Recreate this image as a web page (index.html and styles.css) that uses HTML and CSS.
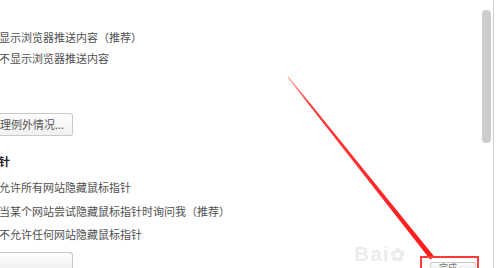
FILE: index.html
```html
<!DOCTYPE html>
<html lang="zh">
<head>
<meta charset="utf-8">
<link rel="stylesheet" href="styles.css">
</head>
<body>
<div class="page">
  <div class="content">
    <div class="opt first">显示浏览器推送内容（推荐）</div>
    <div class="opt">不显示浏览器推送内容</div>
    <div class="btn manage">理例外情况...</div>
    <div class="heading">针</div>
    <div class="opt tall first2">允许所有网站隐藏鼠标指针</div>
    <div class="opt tall">当某个网站尝试隐藏鼠标指针时询问我（推荐）</div>
    <div class="opt tall">不允许任何网站隐藏鼠标指针</div>
    <div class="bottom">
      <div class="btn stub"></div>
      <div class="btn done">完成</div>
    </div>
  </div>
  <div class="scroll">
    <div class="track"><div class="thumb"></div></div>
    <div class="divider"></div>
  </div>
</div>
<div class="watermark">Bai<span class="paw">✿</span></div>
<svg class="annot" width="497" height="268" viewBox="0 0 497 268">
  <defs>
    <linearGradient id="g" x1="288" y1="77" x2="432" y2="258" gradientUnits="userSpaceOnUse">
      <stop offset="0" stop-color="#ff3030" stop-opacity="0.35"/>
      <stop offset="0.15" stop-color="#ff2424" stop-opacity="0.9"/>
      <stop offset="1" stop-color="#ff1a1a"/>
    </linearGradient>
  </defs>
  <polygon points="288.5,76.6 287.5,77.4 430.2,259.4 434.2,256.4" fill="url(#g)"/>
  <rect x="421" y="257" width="57" height="16" fill="none" stroke="#ff3b3b" stroke-width="2"/>
</svg>
</body>
</html>
```
FILE: styles.css
```css
html, body {
  margin: 0;
  padding: 0;
  background: #fff;
}
body {
  width: 497px;
  height: 268px;
  overflow: hidden;
  position: relative;
  font-family: "Noto Sans CJK SC", "Noto Sans", sans-serif;
}
.page {
  display: flex;
  height: 268px;
  overflow: hidden;
}
.content {
  flex: 1;
  display: flex;
  flex-direction: column;
  align-items: flex-start;
  font-size: 11px;
  color: #505050;
  margin-left: -1px;
}
.opt {
  height: 21px;
  line-height: 21px;
  white-space: nowrap;
}
.opt.first {
  margin-top: 27px;
}
.opt.tall {
  height: 23.5px;
  line-height: 23.5px;
}
.opt.first2 {
  margin-top: 5px;
}
.btn {
  box-sizing: border-box;
  border: 1px solid #c9c9c9;
  border-radius: 3px;
  background: linear-gradient(#fdfdfd, #f1f1f1);
  color: #555;
  font-size: 11px;
  white-space: nowrap;
}
.manage {
  margin-top: 44px;
  height: 23px;
  line-height: 21px;
  width: 74px;
  border-left: none;
  border-radius: 0 3px 3px 0;
  padding-left: 1px;
}
.heading {
  margin-top: 15px;
  height: 20px;
  line-height: 20px;
  font-weight: bold;
  color: #222;
  font-size: 11px;
}
.bottom {
  align-self: stretch;
  display: flex;
  justify-content: space-between;
  align-items: flex-start;
  margin-top: 5px;
}
.stub {
  width: 74px;
  height: 16px;
  border-left: none;
  border-bottom: none;
  border-radius: 0 3px 0 0;
}
.done {
  margin-top: 10px;
  margin-right: 4px;
  width: 46px;
  height: 6px;
  line-height: 10px;
  padding-left: 8px;
  color: #777;
  font-size: 9px;
  border-bottom: none;
  overflow: hidden;
}
.scroll {
  width: 17px;
  display: flex;
  height: 268px;
}
.track {
  width: 13px;
  padding-left: 2px;
  box-sizing: border-box;
}
.thumb {
  margin-top: 10px;
  width: 9px;
  height: 133px;
  border-radius: 4px;
  background: #cdcdcd;
}
.divider {
  width: 1px;
  background: #cfcfcf;
  height: 268px;
}
.watermark {
  position: absolute;
  left: 354px;
  top: 242px;
  font-family: "Liberation Sans", sans-serif;
  font-size: 21px;
  line-height: 24px;
  font-weight: bold;
  color: rgba(170, 170, 170, 0.22);
  letter-spacing: 1px;
}
.paw {
  font-size: 18px;
}
.annot {
  position: absolute;
  left: 0;
  top: 0;
}
```
